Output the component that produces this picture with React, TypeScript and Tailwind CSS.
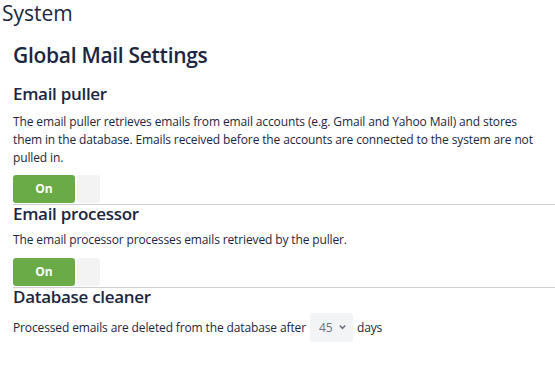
import { useState } from 'react';

const FONT = { fontFamily: '"Open Sans", "Noto Sans", sans-serif' };

function Toggle({ on, onChange }: { on: boolean; onChange: (v: boolean) => void }) {
  return (
    <button onClick={() => onChange(!on)} className="flex h-[28px] items-stretch gap-[2px]">
      <span
        className={`flex w-[62px] items-center justify-center rounded-[3px] text-[12px] font-bold ${
          on ? 'bg-[#6aab47] text-white' : 'bg-[#f3f3f3] text-transparent'
        }`}
      >
        On
      </span>
      <span
        className={`flex w-[23px] items-center justify-center rounded-[3px] text-[12px] font-bold ${
          on ? 'bg-[#f3f3f3] text-transparent' : 'bg-[#9ca3af] text-white'
        }`}
      >
        {on ? '' : 'Off'}
      </span>
    </button>
  );
}

export default function App() {
  const [puller, setPuller] = useState(true);
  const [processor, setProcessor] = useState(true);
  const [days, setDays] = useState('45');

  return (
    <div className="min-h-[369px] w-[555px] overflow-hidden bg-white text-[#1d2640]" style={FONT}>
      <h1 className="pl-[2px] text-[21px] leading-[26px]">System</h1>
      <div className="pl-[13px]">
        <h2 className="mt-[15px] text-[21px] font-semibold leading-[28px] tracking-[-0.3px]">
          Global Mail Settings
        </h2>

        {/* Email puller */}
        <h3 className="mt-[16px] text-[17px] font-semibold leading-[18px] tracking-[-0.3px]">Email puller</h3>
        <p className="mt-[10px] w-[535px] text-[12px] leading-[18px] tracking-[-0.13px]">
          The email puller retrieves emails from email accounts (e.g. Gmail and Yahoo Mail) and stores
          them in the database. Emails received before the accounts are connected to the system are not
          pulled in.
        </p>
        <div className="mt-[8px]">
          <Toggle on={puller} onChange={setPuller} />
        </div>
        <div className="mt-[1px] border-t border-[#cfcfcf]" />

        {/* Email processor */}
        <h3 className="text-[17px] font-semibold leading-[18px] tracking-[-0.3px]">Email processor</h3>
        <p className="mt-[8px] text-[12px] leading-[18px] tracking-[-0.13px]">
          The email processor processes emails retrieved by the puller.
        </p>
        <div className="mt-[9px]">
          <Toggle on={processor} onChange={setProcessor} />
        </div>
        <div className="mt-[1px] border-t border-[#cfcfcf]" />

        {/* Database cleaner */}
        <h3 className="text-[17px] font-semibold leading-[17px] tracking-[-0.3px]">Database cleaner</h3>
        <div className="mt-[8px] flex items-center gap-[4px] text-[12px] tracking-[-0.13px]">
          <span>Processed emails are deleted from the database after</span>
          <div className="relative">
            <select
              value={days}
              onChange={(e) => setDays(e.target.value)}
              className="h-[29px] w-[43px] appearance-none rounded-[3px] bg-[#f3f4f6] pl-[9px] text-[12px] text-[#6b7280] outline-none"
            >
              {['7', '14', '30', '45', '60', '90'].map((d) => (
                <option key={d} value={d}>
                  {d}
                </option>
              ))}
            </select>
            <svg
              className="pointer-events-none absolute right-[7px] top-[11px]"
              width="7"
              height="6"
              viewBox="0 0 7 6"
            >
              <path d="M0.8 1.5 L3.5 4.3 L6.2 1.5" stroke="#6b7280" strokeWidth="1.6" fill="none" />
            </svg>
          </div>
          <span>days</span>
        </div>
      </div>
    </div>
  );
}
